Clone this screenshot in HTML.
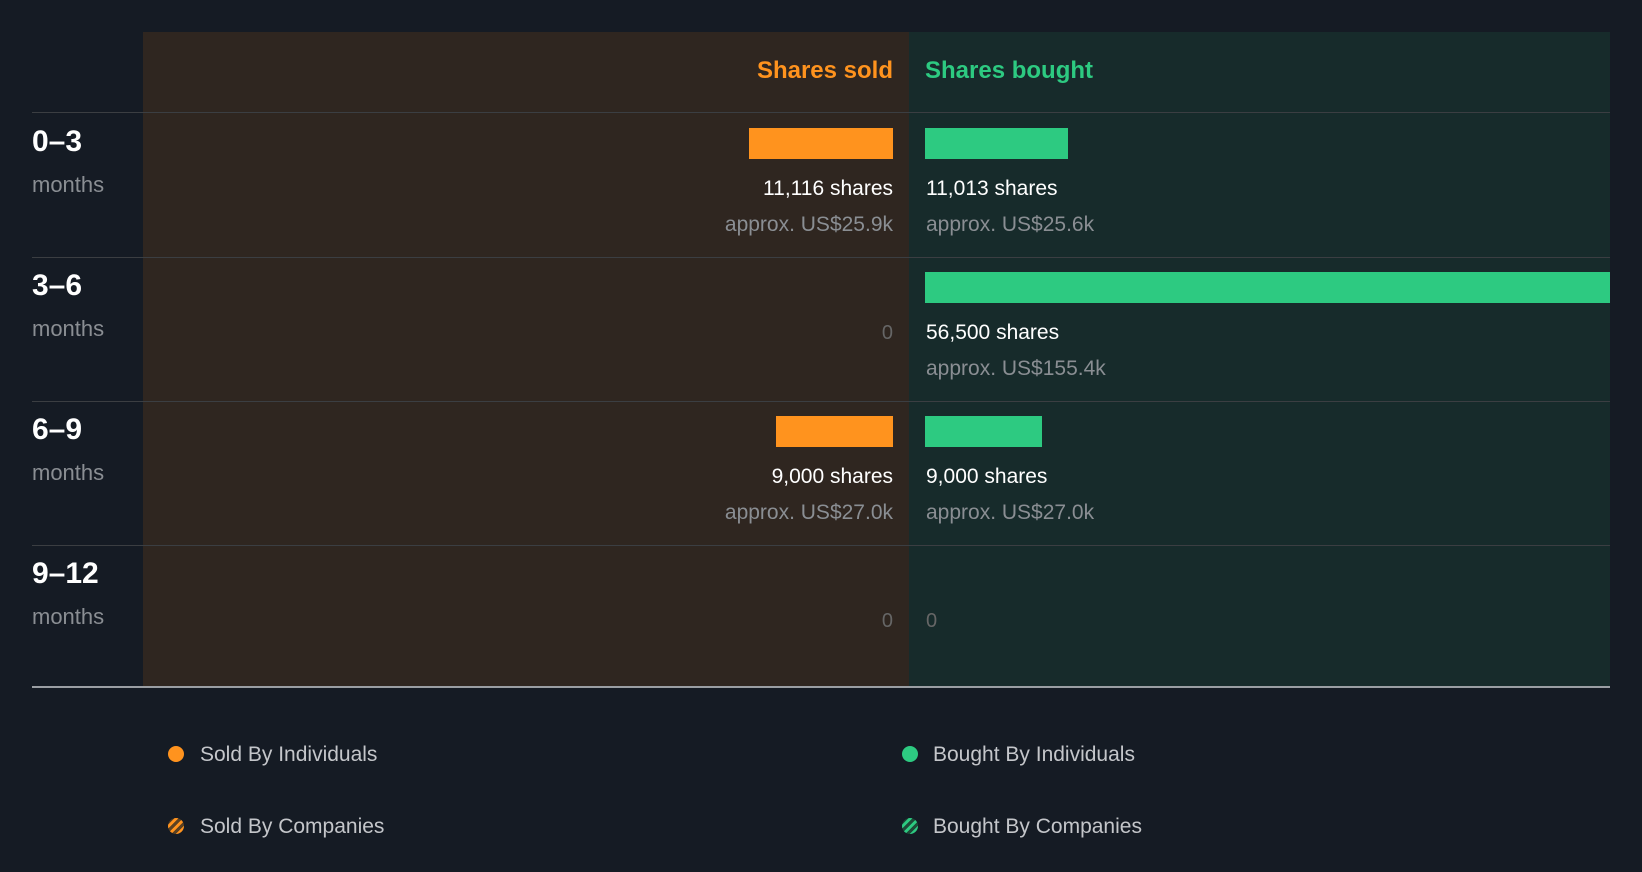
<!DOCTYPE html>
<html><head><style>
*{margin:0;padding:0;box-sizing:border-box}
body{width:1642px;height:872px;background:#151b24;font-family:"Liberation Sans",sans-serif;position:relative;overflow:hidden}
.a{position:absolute}
.l{left:143px;width:766px;top:32px;height:655px;background:#2f2620}
.r{left:909px;width:701px;top:32px;height:655px;background:#172b2b}
.hl{left:32px;width:1578px;height:1px;background:#3b3e42}
.or{background:#ff931e;height:31px}
.gr{background:#2dca81;height:31px}
.t{font-size:21px;color:#fff;line-height:24px;white-space:nowrap}
.s{font-size:21px;color:#8a8e93;line-height:24px;white-space:nowrap}
.rt{right:749px;text-align:right}
.lt{left:926px}
.lab{left:32px;font-size:30px;font-weight:bold;color:#fff;line-height:30px}
.mo{left:32px;font-size:22px;color:#8a8e93;line-height:24px}
.z{font-size:20px;color:#666;line-height:24px}
.leg{font-size:21px;color:#c4c6ca;line-height:24px;white-space:nowrap}
.dot{width:16px;height:16px;border-radius:50%}
</style></head><body>
<div class="a l"></div><div class="a r"></div>
<div class="a" style="right:749px;top:57px;font-size:24px;font-weight:bold;color:#ff931e">Shares sold</div>
<div class="a" style="left:925px;top:57px;font-size:24px;font-weight:bold;color:#2dca81">Shares bought</div>
<div class="a hl" style="top:112px"></div>
<div class="a hl" style="top:257px"></div>
<div class="a hl" style="top:401px"></div>
<div class="a hl" style="top:545px"></div>
<div class="a" style="left:32px;width:1578px;top:686px;height:2px;background:#9a9ea3"></div>

<div class="a lab" style="top:127px">0–3</div><div class="a mo" style="top:173px">months</div>
<div class="a or" style="left:749px;width:144px;top:128px"></div>
<div class="a gr" style="left:925px;width:143px;top:128px"></div>
<div class="a t rt" style="top:177px">11,116 shares</div>
<div class="a s rt" style="top:213px">approx. US$25.9k</div>
<div class="a t lt" style="top:177px">11,013 shares</div>
<div class="a s lt" style="top:213px">approx. US$25.6k</div>

<div class="a lab" style="top:271px">3–6</div><div class="a mo" style="top:317px">months</div>
<div class="a gr" style="left:925px;width:685px;top:272px"></div>
<div class="a z rt" style="top:321px">0</div>
<div class="a t lt" style="top:321px">56,500 shares</div>
<div class="a s lt" style="top:357px">approx. US$155.4k</div>

<div class="a lab" style="top:415px">6–9</div><div class="a mo" style="top:461px">months</div>
<div class="a or" style="left:776px;width:117px;top:416px"></div>
<div class="a gr" style="left:925px;width:117px;top:416px"></div>
<div class="a t rt" style="top:465px">9,000 shares</div>
<div class="a s rt" style="top:501px">approx. US$27.0k</div>
<div class="a t lt" style="top:465px">9,000 shares</div>
<div class="a s lt" style="top:501px">approx. US$27.0k</div>

<div class="a lab" style="top:559px">9–12</div><div class="a mo" style="top:605px">months</div>
<div class="a z rt" style="top:609px">0</div>
<div class="a z lt" style="top:609px">0</div>

<div class="a dot" style="left:168px;top:746px;background:#ff931e"></div>
<div class="a leg" style="left:200px;top:743px">Sold By Individuals</div>
<div class="a dot" style="left:902px;top:746px;background:#2dca81"></div>
<div class="a leg" style="left:933px;top:743px">Bought By Individuals</div>
<div class="a dot" style="left:168px;top:818px;background:repeating-linear-gradient(-45deg,#5a4122 0 3px,#ff931e 3px 6px)"></div>
<div class="a leg" style="left:200px;top:815px">Sold By Companies</div>
<div class="a dot" style="left:902px;top:818px;background:repeating-linear-gradient(-45deg,#1d4a38 0 3px,#2dca81 3px 6px)"></div>
<div class="a leg" style="left:933px;top:815px">Bought By Companies</div>
</body></html>
